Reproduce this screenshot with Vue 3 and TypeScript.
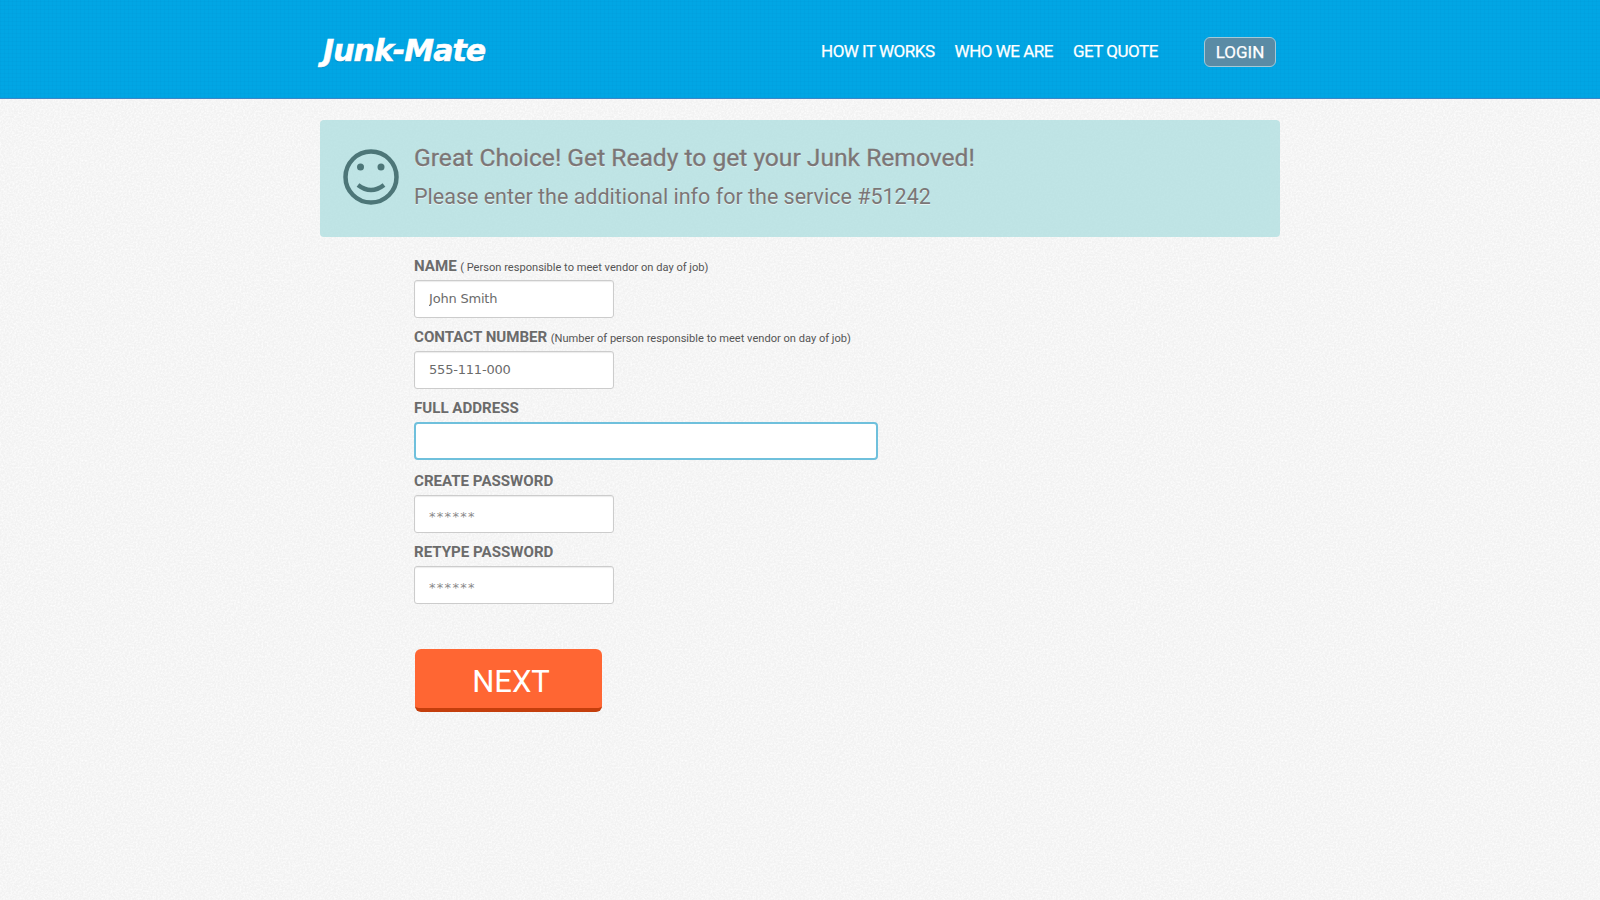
<script setup lang="ts">
interface Field {
  key: string
  label: string
  hint?: string
  value: string
  wide?: boolean
  masked?: boolean
}

const navLinks: string[] = ['HOW IT WORKS', 'WHO WE ARE', 'GET QUOTE']

const fields: Field[] = [
  { key: 'name', label: 'NAME', hint: '( Person responsible to meet vendor on day of job)', value: 'John Smith' },
  { key: 'contact', label: 'CONTACT NUMBER', hint: '(Number of person responsible to meet vendor on day of job)', value: '555-111-000' },
  { key: 'address', label: 'FULL ADDRESS', value: '', wide: true },
  { key: 'password', label: 'CREATE PASSWORD', value: '******', masked: true },
  { key: 'retype', label: 'RETYPE PASSWORD', value: '******', masked: true }
]
</script>

<template>
  <div class="page">
    <header class="header">
      <div class="header-inner">
        <div class="logo">Junk-Mate</div>
        <nav class="nav">
          <a v-for="link in navLinks" :key="link" class="nav-link">{{ link }}</a>
        </nav>
        <a class="login">LOGIN</a>
      </div>
    </header>

    <main class="content">
      <section class="notice">
        <svg class="smiley" width="56" height="56" viewBox="0 0 56 56">
          <circle cx="28" cy="28" r="25.5" fill="none" stroke="#4d7678" stroke-width="4.5" />
          <circle cx="17.500" cy="18" r="3.5" fill="#4d7678" />
          <circle cx="38" cy="18" r="3.5" fill="#4d7678" />
          <path d="M15 36 Q28 46 41 36" fill="none" stroke="#4d7678" stroke-width="4.5" />
        </svg>
        <div class="notice-text">
          <h1>Great Choice! Get Ready to get your Junk Removed!</h1>
          <p>Please enter the additional info for the service #51242</p>
        </div>
      </section>

      <form class="form" @submit.prevent>
        <div v-for="field in fields" :key="field.key" class="field">
          <label :for="field.key">{{ field.label }}<small v-if="field.hint">{{ field.hint }}</small></label>
          <input
            :id="field.key"
            type="text"
            :value="field.value"
            :class="{ wide: field.wide, masked: field.masked }"
          />
        </div>
        <button class="next" type="button">NEXT</button>
      </form>
    </main>
  </div>
</template>

<style>
html,
body {
  margin: 0;
  background: #f5f5f5;
}
</style>

<style scoped>
.page {
  min-height: 900px;
  font-family: Roboto, sans-serif;
  background-color: #f2f2f2;
  background-image: url("data:image/svg+xml,%3Csvg xmlns='http://www.w3.org/2000/svg' width='300' height='300'%3E%3Cfilter id='n' color-interpolation-filters='sRGB'%3E%3CfeTurbulence type='fractalNoise' baseFrequency='.55' numOctaves='2' stitchTiles='stitch'/%3E%3CfeColorMatrix values='0 0 0 0 1 0 0 0 0 1 0 0 0 0 1 1.6 0 0 0 -.55'/%3E%3C/filter%3E%3Crect width='300' height='300' filter='url(%23n)'/%3E%3C/svg%3E");
}

.header {
  height: 98px;
  background-color: #01a6e4;
  background-image:
    repeating-linear-gradient(90deg, rgba(0, 80, 150, 0.035) 0 1px, transparent 1px 4px),
    repeating-linear-gradient(0deg, rgba(0, 80, 150, 0.035) 0 1px, transparent 1px 4px);
  border-bottom: 1px solid #3f86c8;
}

.header-inner {
  width: 960px;
  height: 100%;
  margin: 0 auto;
  display: flex;
  align-items: center;
  color: #fff;
  box-sizing: border-box;
  padding-top: 5px;
}

.logo {
  width: 501px;
  box-sizing: border-box;
  padding-left: 3px;
  margin-top: -2px;
  font-family: "DejaVu Sans", sans-serif;
  font-size: 30px;
  font-weight: 700;
  font-style: italic;
  letter-spacing: -1px;
  -webkit-text-stroke: 0.6px #fff;
  text-shadow: 0 1px 1px rgba(0, 60, 110, 0.35);
}

.nav {
  display: flex;
  gap: 20px;
  width: 383px;
  margin-top: -2px;
}

.nav-link {
  font-size: 17px;
  font-weight: 400;
  letter-spacing: -0.5px;
  -webkit-text-stroke: 0.25px #fff;
}

.login {
  width: 70px;
  height: 28px;
  line-height: 29px;
  text-align: center;
  font-size: 17px;
  font-weight: 400;
  -webkit-text-stroke: 0.25px #fff;
  background: #5a8ba5;
  border: 1px solid #a5c8d6;
  border-radius: 6px;
}

.content {
  width: 960px;
  margin: 0 auto;
  padding-top: 21px;
}

.notice {
  height: 117px;
  box-sizing: border-box;
  display: flex;
  align-items: center;
  gap: 15px;
  padding: 0 24px 2px 23px;
  background: rgba(172, 222, 223, 0.75);
  border-radius: 4px;
}

.smiley {
  margin-bottom: 1px;
}

.notice-text {
  color: #7b7676;
  text-shadow: 0 1px 0 rgba(255, 255, 255, 0.6);
}

.notice h1 {
  margin: 0 0 9px;
  font-size: 24.6px;
  font-weight: 400;
  line-height: 30px;
  -webkit-text-stroke: 0.3px #7b7676;
}

.notice p {
  margin: 0;
  font-size: 21.5px;
  line-height: 30px;
}

.form {
  padding: 20px 0 0 94px;
}

.field {
  margin-bottom: 10px;
}

.field:nth-child(3) {
  margin-bottom: 12px;
}

.field label {
  display: block;
  height: 23px;
  line-height: 18px;
  font-size: 15.1px;
  font-weight: 700;
  color: #6b6b6b;
}

.field small {
  margin-left: 3.5px;
  font-size: 11.1px;
  font-weight: 400;
  color: #555;
}

.field input {
  display: block;
  width: 200px;
  height: 38px;
  box-sizing: border-box;
  padding: 0 14px 2px;
  font-family: "DejaVu Sans", sans-serif;
  font-size: 13px;
  letter-spacing: -0.2px;
  color: #6b6b6b;
  background: #fff;
  border: 1px solid #ccc;
  border-radius: 3px;
  box-shadow: inset 0 1px 1px rgba(0, 0, 0, 0.08);
  outline: none;
}

.field input.wide {
  width: 464px;
  border: 2px solid #6fc0dc;
  border-radius: 4px;
  box-shadow: none;
}

.field input.masked {
  padding: 5px 14px 0;
  letter-spacing: 1.3px;
  color: #8a8a8a;
}

.next {
  display: block;
  width: 187px;
  height: 63px;
  margin: 45px 0 0 1px;
  padding: 5px 0 0 5px;
  font-family: Roboto, sans-serif;
  font-size: 31px;
  color: #fff;
  background: #ff6633;
  border: 0;
  border-bottom: 4px solid #c43e0c;
  border-radius: 6px;
}
</style>
